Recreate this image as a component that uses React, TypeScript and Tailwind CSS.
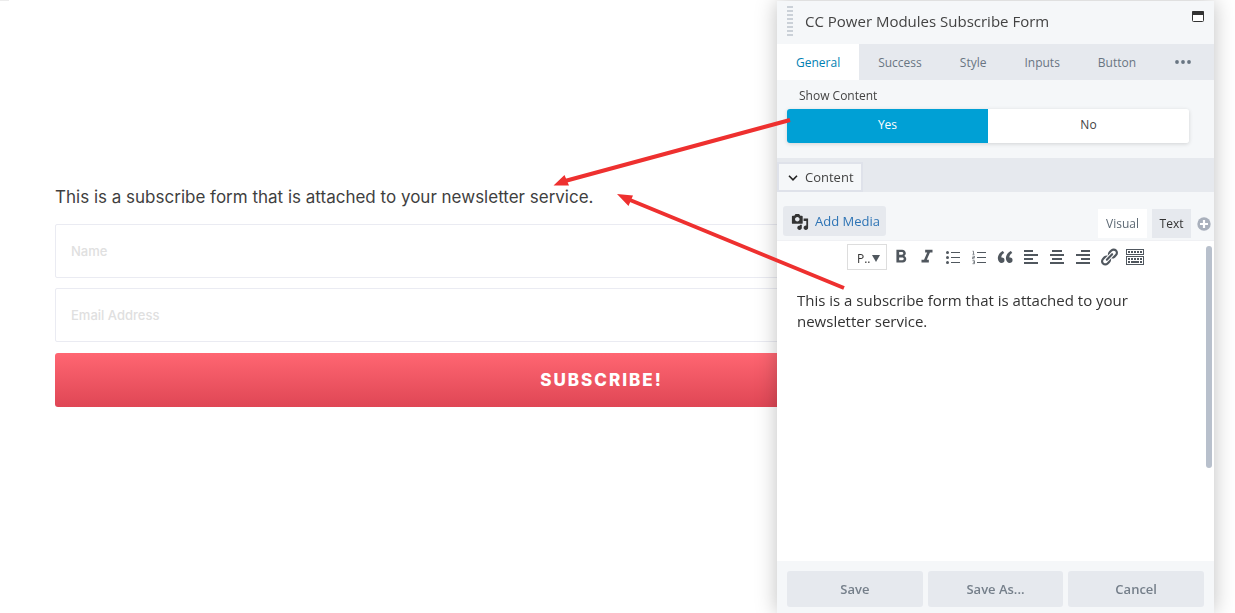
import type { ReactNode } from "react";
import { MdFormatBold, MdFormatItalic } from "react-icons/md";

const tabs = ["General", "Success", "Style", "Inputs", "Button"];

function ToolIcon({ children }: { children: ReactNode }) {
  return (
    <svg viewBox="0 0 20 20" className="size-5" fill="currentColor" aria-hidden="true">
      {children}
    </svg>
  );
}

function BulletIcon() {
  return (
    <ToolIcon>
      {[5, 10, 15].map((y) => (
        <g key={y}>
          <circle cx="4.5" cy={y + 0.5} r="1.5" />
          <rect x="8" y={y} width="9" height="1" />
        </g>
      ))}
    </ToolIcon>
  );
}

function NumberIcon() {
  return (
    <ToolIcon>
      <path
        d="M3.500 4.200h1v3M3.500 7.300h2M3.500 9.200h2v1.300h-2v1.300h2M3.500 13.700h2v3h-2M4 15.200h1.500"
        fill="none"
        stroke="currentColor"
        strokeWidth=".7"
      />
      <path d="M8 5h9v1H8zM8 10h9v1H8zM8 15h9v1H8z" />
    </ToolIcon>
  );
}

const tools: { name: string; icon: ReactNode }[] = [
  { name: "Bold", icon: <MdFormatBold className="size-[22px]" /> },
  { name: "Italic", icon: <MdFormatItalic className="size-[22px]" /> },
  { name: "Bulleted list", icon: <BulletIcon /> },
  { name: "Numbered list", icon: <NumberIcon /> },
  {
    name: "Blockquote",
    icon: (
      <ToolIcon>
        <path d="M9.49 13.22c0-.74-.2-1.38-.61-1.9-.62-.78-1.83-.88-2.53-.72-.29-1.65 1.11-3.75 2.92-4.65L7.88 4c-2.73 1.3-5.42 4.28-4.96 8.05C3.21 14.43 4.59 16 6.54 16c.85 0 1.56-.25 2.12-.75s.83-1.18.83-2.03zm8.05 0c0-.74-.2-1.38-.61-1.9-.63-.78-1.83-.88-2.53-.72-.29-1.65 1.11-3.75 2.92-4.65L15.93 4c-2.73 1.3-5.41 4.28-4.95 8.05.29 2.38 1.66 3.95 3.61 3.95.85 0 1.56-.25 2.12-.75s.83-1.18.83-2.03z" />
      </ToolIcon>
    ),
  },
  {
    name: "Align left",
    icon: (
      <ToolIcon>
        <path d="M3 3h9v2H3zM3 7h14v2H3zM3 11h9v2H3zM3 15h14v2H3z" />
      </ToolIcon>
    ),
  },
  {
    name: "Align center",
    icon: (
      <ToolIcon>
        <path d="M5 3h10v2H5zM3 7h14v2H3zM5 11h10v2H5zM3 15h14v2H3z" />
      </ToolIcon>
    ),
  },
  {
    name: "Align right",
    icon: (
      <ToolIcon>
        <path d="M8 3h9v2H8zM3 7h14v2H3zM8 11h9v2H8zM3 15h14v2H3z" />
      </ToolIcon>
    ),
  },
  {
    name: "Insert link",
    icon: (
      <ToolIcon>
        <path d="M17.74 2.76c1.68 1.69 1.68 4.41 0 6.1l-1.53 1.52c-1.12 1.12-2.7 1.47-4.14 1.09l2.62-2.61.76-.77.76-.76c.84-.84.84-2.2 0-3.04-.84-.85-2.2-.85-3.04 0l-.77.76-3.38 3.38c-.37-1.44-.02-3.02 1.1-4.14l1.52-1.53c1.69-1.68 4.42-1.68 6.1 0zM8.59 13.43l5.34-5.34c.42-.42.42-1.1 0-1.52-.44-.43-1.13-.39-1.53 0l-5.33 5.34c-.42.42-.42 1.1 0 1.52.44.43 1.13.39 1.52 0zm-.76 2.29l4.14-4.15c.38 1.44.03 3.02-1.09 4.14l-1.52 1.53c-1.69 1.68-4.41 1.68-6.1 0-1.68-1.68-1.68-4.42 0-6.1l1.53-1.52c1.12-1.12 2.7-1.47 4.14-1.1l-4.14 4.15c-.85.84-.85 2.2 0 3.05.84.84 2.2.84 3.04 0z" />
      </ToolIcon>
    ),
  },
  {
    name: "Toolbar toggle",
    icon: (
      <ToolIcon>
        <path fillRule="evenodd" d="M1 2h18v6H1zM2 3v4h16V3zM1 9h18v9H1zM2 10v7h16v-7z" />
        <path d="M3 4h2v2H3zM6 4h2v2H6zM9 4h2v2H9zM12 4h2v2h-2zM15 4h2v2h-2zM3 11h2v2H3zM6 11h2v2H6zM9 11h2v2H9zM12 11h2v2h-2zM15 11h2v2h-2zM3 14h2v2H3zM6 14h8v2H6zM15 14h2v2h-2z" />
      </ToolIcon>
    ),
  },
];

function SubscribePage() {
  return (
    <main className="min-h-screen bg-white">
      <div className="h-px w-[9px] bg-[#ececec]" />
      <form className="flex flex-col pt-[183px] pr-[87px] pl-[55px] font-['Inter',sans-serif]">
        <p className="mb-[14px] text-[17px] leading-[26px] text-[#3f3f3f]">
          This is a subscribe form that is attached to your newsletter service.
        </p>
        <input
          aria-label="Name"
          placeholder="Name"
          className="mb-[10px] h-[54px] rounded-xs border border-[#eaebf2] px-[15px] text-[13px] font-medium placeholder:text-[#e0e0e0]"
        />
        <input
          aria-label="Email Address"
          placeholder="Email Address"
          className="mb-[11px] h-[54px] rounded-xs border border-[#eaebf2] px-[15px] text-[13px] font-medium placeholder:text-[#e0e0e0]"
        />
        <button
          type="button"
          className="h-[54px] rounded-[3px] bg-linear-to-b from-[#ff6672] to-[#df4655] pt-[2px] text-[17px] font-extrabold tracking-[2px] text-white"
        >
          SUBSCRIBE!
        </button>
      </form>
    </main>
  );
}

function SettingsPanel() {
  return (
    <aside className="fixed top-px right-[21px] bottom-0 flex w-[437px] flex-col bg-[#f5f7f9] font-['Open_Sans',sans-serif] text-[#434343] shadow-[0_0_20px_rgba(0,0,0,0.25)]">
      <header className="flex h-[43px] shrink-0 items-center px-[10px] pb-[2px]">
        <span className="mb-[2px] flex w-[6px] flex-col gap-[2px]" aria-hidden="true">
          {[0, 1, 2, 3, 4, 5, 6, 7].map((n) => (
            <i key={n} className="h-[2px] bg-[#cbd1d8]" />
          ))}
        </span>
        <h1 className="ml-3 flex-1 text-[15px]">CC Power Modules Subscribe Form</h1>
        <button type="button" aria-label="Expand" className="mb-[10px] text-[#333333]">
          <svg viewBox="0 0 12 11" className="h-[11px] w-3">
            <rect x=".5" y=".5" width="11" height="10" rx="1" fill="#fff" stroke="currentColor" />
            <path d="M0 1q0-1 1-1h10q1 0 1 1v3H0z" fill="currentColor" />
          </svg>
        </button>
      </header>

      <nav className="flex h-9 shrink-0 bg-[#e6e9ee] text-[12px] text-[#697582]">
        {tabs.map((tab, i) => (
          <button
            key={tab}
            type="button"
            className={i === 0 ? "bg-white px-[19px] pt-px text-[#0080b2]" : "px-[19px] pt-px"}
          >
            {tab}
          </button>
        ))}
        <button type="button" aria-label="More" className="px-5">
          <svg viewBox="0 0 16 4" className="h-1 w-4" fill="currentColor">
            <circle cx="2" cy="2" r="1.9" />
            <circle cx="8" cy="2" r="1.9" />
            <circle cx="14" cy="2" r="1.9" />
          </svg>
        </button>
      </nav>

      <section className="h-[78px] shrink-0 pt-[7px] pr-[25px] pl-[10px]">
        <h2 className="pl-3 text-[12px] leading-[18px]">Show Content</h2>
        <div className="mt-1 flex h-[34px] overflow-hidden rounded-[3px] text-[12px] shadow-[0_1px_4px_rgba(0,0,0,0.15)]">
          <button type="button" className="flex-1 bg-[#00a0d5] pb-[2px] text-white">
            Yes
          </button>
          <button type="button" className="flex-1 bg-white pb-[2px]">
            No
          </button>
        </div>
      </section>

      <div className="flex h-[34px] shrink-0 bg-[#e6e9ee] pt-1">
        <button
          type="button"
          className="flex items-center gap-[7px] border-2 border-[#dfe2ea] bg-[#f5f7f9] pt-px pr-[7px] pl-[9px] text-[13px]"
        >
          <svg viewBox="0 0 10 6" className="h-[6px] w-[10px]" fill="none" stroke="#222" strokeWidth="1.6">
            <path d="M1 .8l4 4 4-4" />
          </svg>
          Content
        </button>
      </div>

      <div className="flex h-12 shrink-0 items-end pl-[6px]">
        <button
          type="button"
          className="mb-1 flex h-[30px] items-center gap-[6px] rounded-[3px] bg-[#e6e9ee] pt-px pr-[6px] pl-2 text-[13px] text-[#2e74b5]"
        >
          <svg viewBox="0 0 20 20" className="size-[18px] text-[#333333]" fill="currentColor" aria-hidden="true">
            <path d="M13 11V4c0-.55-.45-1-1-1h-1.67L9 1H5L3.67 3H2c-.55 0-1 .45-1 1v7c0 .55.45 1 1 1h10c.55 0 1-.45 1-1zM7 4.5c1.38 0 2.5 1.12 2.5 2.5S8.38 9.5 7 9.5 4.5 8.38 4.5 7 5.62 4.5 7 4.5zM14 6h5v10.5c0 1.38-1.12 2.5-2.5 2.5S14 17.88 14 16.5s1.12-2.5 2.5-2.5c.17 0 .34.02.5.05V9h-3V6zm-4 8.05V13h2v3.5c0 1.38-1.12 2.5-2.5 2.5S7 17.88 7 16.5 8.12 14 9.5 14c.17 0 .34.02.5.05z" />
          </svg>
          Add Media
        </button>
        <div className="mb-[2px] ml-auto flex items-center text-[12px]">
          <button type="button" className="h-[29px] w-[49px] bg-white text-[#5d6974]">
            Visual
          </button>
          <button type="button" className="ml-[5px] h-[29px] w-[39px] bg-[#e6e9ee] text-[#333333]">
            Text
          </button>
          <button type="button" aria-label="Add field" className="mr-[3px] ml-[6px] text-[#a9b0bc]">
            <svg viewBox="0 0 14 14" className="size-[14px]">
              <circle cx="7" cy="7" r="6.7" fill="currentColor" />
              <path d="M7 3v8M3 7h8" stroke="#fff" strokeWidth="2.2" />
            </svg>
          </button>
        </div>
      </div>

      <div className="flex min-h-0 flex-1 border-t border-[#f0f1f4] bg-white">
        <div className="flex flex-1 flex-col">
          <div className="flex items-center pt-[3px] pl-[70px] text-[#50575e]">
            <div className="relative mr-[1px] h-[26px] w-10 border border-[#dddddd]">
              <select aria-label="Paragraph style" className="size-full appearance-none pl-[9px] text-[12px] text-[#333333]">
                <option>P..</option>
              </select>
              <svg viewBox="0 0 8 7" className="pointer-events-none absolute top-[10px] right-[6px] h-[7px] w-2" fill="currentColor">
                <path d="M0 0h8L4 7z" />
              </svg>
            </div>
            {tools.map((tool) => (
              <button key={tool.name} type="button" aria-label={tool.name} className="grid h-[26px] w-[26px] place-items-center">
                {tool.icon}
              </button>
            ))}
          </div>
          <textarea
            aria-label="Content"
            className="mt-5 flex-1 resize-none pr-14 pl-5 text-[15px] leading-[21px] text-[#333333] outline-none"
            defaultValue="This is a subscribe form that is attached to your newsletter service."
          />
        </div>
        <div className="mt-[5px] mr-[2px] h-[222px] w-[6px] rounded-full bg-[#b8c0cc]" />
      </div>

      <footer className="grid shrink-0 grid-cols-3 gap-[5px] px-[10px] pt-[10px] pb-[6px] text-[13px] font-semibold text-[#757f8a]">
        {["Save", "Save As...", "Cancel"].map((label) => (
          <button key={label} type="button" className="h-9 rounded-[3px] bg-[#e6e9ee] pt-px">
            {label}
          </button>
        ))}
      </footer>
    </aside>
  );
}

function Arrows() {
  return (
    <svg
      viewBox="0 0 300 180"
      className="pointer-events-none absolute top-[115px] left-[550px] h-[180px] w-[300px] text-[#ee302f]"
      fill="currentColor"
      stroke="currentColor"
      aria-hidden="true"
    >
      <path d="M240 5L15 66M294 173L80 85" strokeWidth="4" />
      <path d="M3.500 70.500L14.500 60 19 70.500zM67 79L83 80.500 78.500 91z" stroke="none" />
    </svg>
  );
}

export default function App() {
  return (
    <div className="relative">
      <SubscribePage />
      <SettingsPanel />
      <Arrows />
    </div>
  );
}
